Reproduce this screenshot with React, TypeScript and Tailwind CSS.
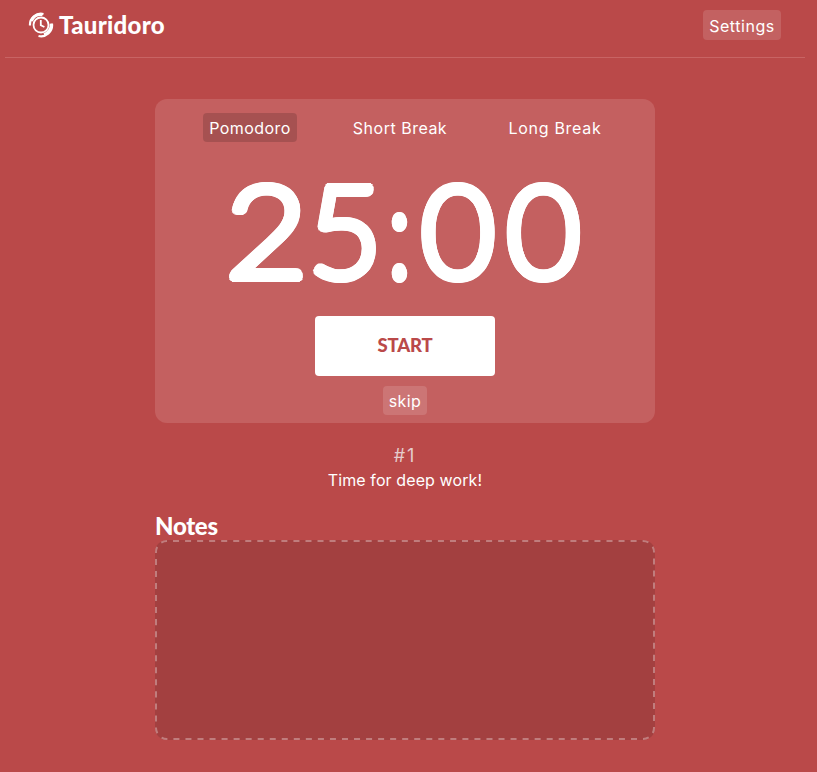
import React from "react";

const digit = "inline-block text-center";

function Logo() {
  return (
    <svg width="26" height="26" viewBox="0 0 26 26" fill="none" stroke="white" className="block">
      <circle cx="13" cy="13" r="7.5" strokeWidth="1.8" />
      <path d="M12.8 8v5.2l3.6 1.8" strokeWidth="1.8" />
      <path d="M2 13.5A11 11 0 0 1 15.5 2" strokeWidth="2.2" />
      <path d="M3.5 8.8A10.4 10.4 0 0 1 14.5 2.7" strokeWidth="3" />
      <path d="M24 12A11 11 0 0 1 10.5 24" strokeWidth="2.2" />
      <path d="M23.2 11.5A10.6 10.6 0 0 1 16 22.6" strokeWidth="3" />
    </svg>
  );
}

export default function App() {
  return (
    <div className="min-h-[772px] w-full bg-[#ba4949] pl-[5px] font-['Inter','Liberation_Sans',sans-serif] text-[16px] leading-[19px] text-white">
      <div className="w-[800px]">
        <header className="flex h-[58px] items-start justify-between border-b border-[#c86464] pr-6 pl-[23px] pt-[10px]">
          <div className="flex items-center gap-[5px] pt-px">
            <Logo />
            <h1 className="font-['Lato',sans-serif] text-[24px] leading-[28px] font-black tracking-[0.3px]">Tauridoro</h1>
          </div>
          <button className="flex h-[30px] w-[78px] items-center justify-center rounded bg-white/[0.13] pt-[2px] tracking-[0.55px]">Settings</button>
        </header>
        <main className="mx-auto w-[500px] pt-[41px]">
          <section className="flex h-[324px] flex-col items-center rounded-xl bg-[#c46060] pt-[14px]">
            <div className="flex h-[29px] w-[404px] justify-between">
              <button className="w-[94px] rounded bg-black/15 pt-[2px] tracking-[0.45px]">Pomodoro</button>
              <button className="w-[106px] pt-[2px] tracking-[0.5px]">Short Break</button>
              <button className="w-[104px] pt-[2px] tracking-[0.7px]">Long Break</button>
            </div>
            <div className="mt-[19px] flex h-[134px] w-[360px] justify-center font-['Lato',sans-serif] text-[129px] leading-[134px] font-light whitespace-nowrap [text-shadow:4px_0_0_#fff,3.7px_1.5px_0_#fff,2.8px_2.8px_0_#fff,1.5px_3.7px_0_#fff,0_4px_0_#fff,-1.5px_3.7px_0_#fff,-2.8px_2.8px_0_#fff,-3.7px_1.5px_0_#fff,-4px_0_0_#fff,-3.7px_-1.5px_0_#fff,-2.8px_-2.8px_0_#fff,-1.5px_-3.7px_0_#fff,0_-4px_0_#fff,1.5px_-3.7px_0_#fff,2.8px_-2.8px_0_#fff,3.7px_-1.5px_0_#fff]">
              <span className={`${digit} w-[81px] scale-x-[1.1]`}>2</span>
              <span className={`${digit} w-[77px]`}>5</span>
              <span className={`${digit} w-[30px] scale-x-[0.78]`}>:</span>
              <span className={`${digit} w-[89px]`}>0</span>
              <span className={`${digit} w-[82px]`}>0</span>
            </div>
            <button className="mt-[21px] h-[60px] w-[180px] shrink-0 rounded bg-white pb-px font-['Lato',sans-serif] text-[18.5px] font-black tracking-[-0.2px] text-[#ba4949]">START</button>
            <button className="mt-[10px] h-[29px] w-[44px] shrink-0 rounded bg-white/[0.13] pt-[2px] tracking-[0.4px]">skip</button>
          </section>
          <div className="flex h-[90px] flex-col items-center pt-[22px]">
            <p className="text-[18px] leading-[22px] tracking-[2px] text-[#e5cdcd]">#1</p>
            <p className="pt-[4px] tracking-[0.1px]">Time for deep work!</p>
          </div>
          <h2 className="h-[27px] font-['Lato',sans-serif] text-[24px] leading-[25px] font-black tracking-[-0.3px]">Notes</h2>
          <div className="relative h-[200px] rounded-xl bg-[#a34040]">
            <svg className="absolute inset-0" width="500" height="200" fill="none">
              <rect x="1" y="1" width="498" height="198" rx="11" pathLength="1368" stroke="white" strokeOpacity="0.32" strokeWidth="2" strokeDasharray="6 6" strokeDashoffset="6" />
            </svg>
          </div>
        </main>
      </div>
    </div>
  );
}
